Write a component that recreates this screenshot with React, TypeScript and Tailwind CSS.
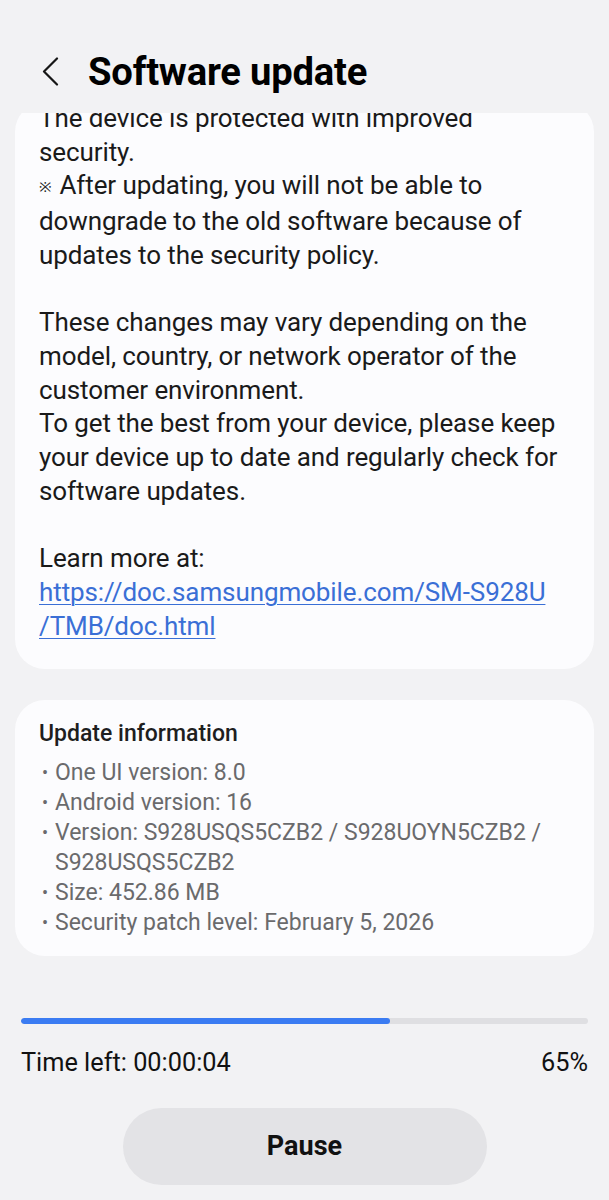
const font = { fontFamily: "Roboto, 'Noto Sans', sans-serif" }

const infoItems = [
  ["One UI version: 8.0"],
  ["Android version: 16"],
  ["Version: S928USQS5CZB2 / S928UOYN5CZB2 /", "S928USQS5CZB2"],
  ["Size: 452.86 MB"],
  ["Security patch level: February 5, 2026"],
]

function BackIcon() {
  return (
    <svg width="20" height="30" viewBox="0 0 20 30" fill="none">
      <polyline points="16,1.5 3,14.5 16,27.5" stroke="#161616" strokeWidth="2.2" strokeLinecap="round" strokeLinejoin="round" />
    </svg>
  )
}

export default function App() {
  return (
    <div className="w-[609px] h-[1200px] bg-[#f2f2f4] flex flex-col overflow-hidden text-black" style={font}>
      {/* header */}
      <div className="h-[113px] shrink-0 flex items-center pl-[41px] pt-[31px] gap-[27px]">
        <BackIcon />
        <h1 className="text-[38.2px] font-bold tracking-[-0.2px] leading-none">Software update</h1>
      </div>

      {/* scrolled notes */}
      <div className="h-[573px] shrink-0 overflow-hidden px-[15px]">
        <div className="mt-[5px] bg-[#fcfcfe] rounded-[30px] pl-[24px] pr-[10px] pb-[26px] text-[26px] leading-[33.7px] text-[#1a1a1a] whitespace-nowrap tracking-[-0.1px]">
          <div className="-mt-[16px]">
            <div>The device is protected with improved</div>
            <div>security.</div>
            <div><span className="text-[15px] mr-[8px] align-[2px]">※</span>After updating, you will not be able to</div>
            <div>downgrade to the old software because of</div>
            <div>updates to the security policy.</div>
            <div>&nbsp;</div>
            <div>These changes may vary depending on the</div>
            <div>model, country, or network operator of the</div>
            <div>customer environment.</div>
            <div>To get the best from your device, please keep</div>
            <div>your device up to date and regularly check for</div>
            <div>software updates.</div>
            <div>&nbsp;</div>
            <div>Learn more at:</div>
            <a className="block text-[#3a6fd6] underline underline-offset-[3px] decoration-1" href="#">
              https://doc.samsungmobile.com/SM-S928U
            </a>
            <a className="block text-[#3a6fd6] underline underline-offset-[3px] decoration-1" href="#">
              /TMB/doc.html
            </a>
          </div>
        </div>
      </div>

      {/* update information */}
      <div className="mx-[15px] mt-[14px] bg-[#fcfcfe] rounded-[30px] pl-[24px] pr-[12px] pt-[20px] pb-[18px]">
        <div className="text-[23px] font-medium leading-[28px] text-[#1e1e1e]">Update information</div>
        <div className="mt-[10px] text-[23px] leading-[30px] text-[#6a6a6c]">
          {infoItems.map((lines, i) => (
            <div key={i} className="flex">
              <span className="w-[16px] pl-[3px] shrink-0 text-[18px]">•</span>
              <div>
                {lines.map((l, j) => (
                  <div key={j} className="whitespace-nowrap">{l}</div>
                ))}
              </div>
            </div>
          ))}
        </div>
      </div>

      {/* progress */}
      <div className="px-[21px] mt-[62px]">
        <div className="h-[6px] rounded-full bg-[#dfdfe2] overflow-hidden">
          <div className="h-full rounded-full bg-[#3b7cf2]" style={{ width: "65%" }} />
        </div>
        <div className="mt-[24px] flex justify-between text-[25.3px] leading-[30px] text-[#111]">
          <span>Time left: 00:00:04</span>
          <span>65%</span>
        </div>
      </div>

      <div className="flex justify-center mt-[30px]">
        <button className="w-[364px] h-[77px] rounded-full bg-[#e3e3e6] text-[27px] font-bold text-[#111]">
          Pause
        </button>
      </div>
    </div>
  )
}
